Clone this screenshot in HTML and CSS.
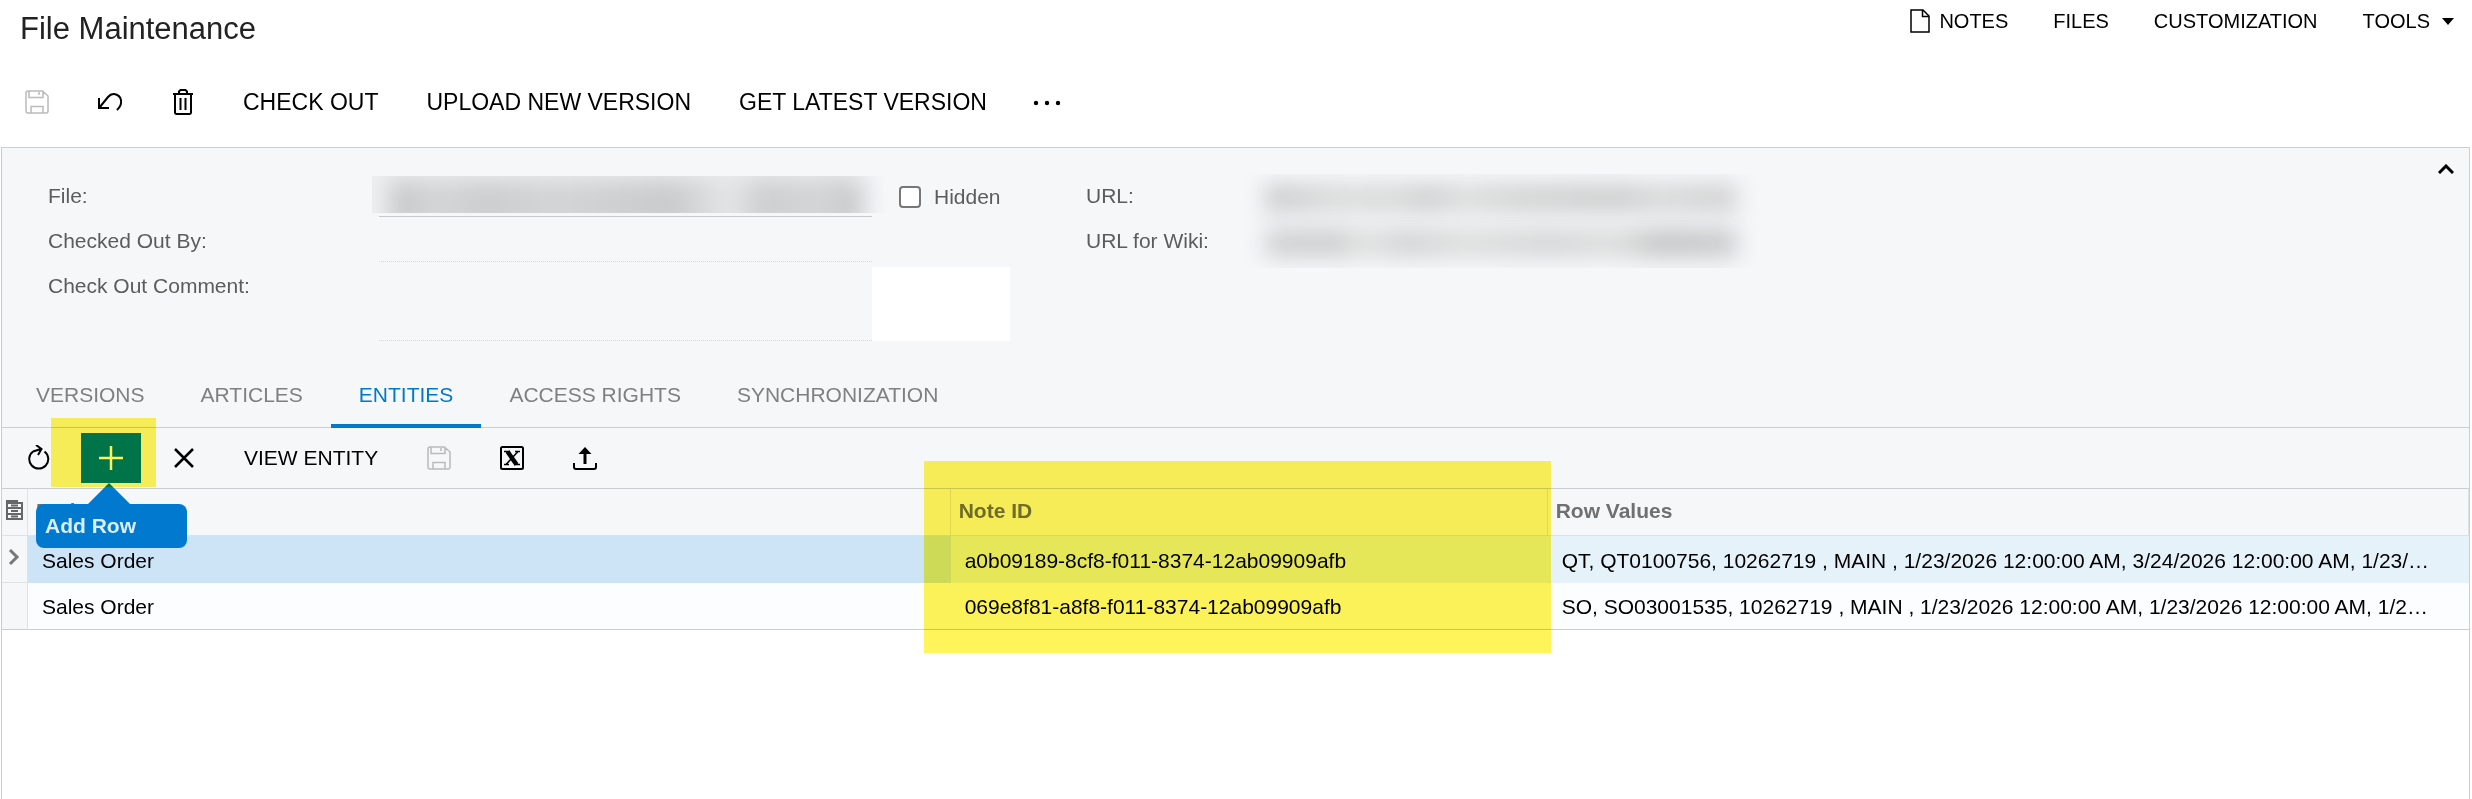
FILE: index.html
```html
<!DOCTYPE html>
<html lang="en">
<head>
    <meta charset="UTF-8">
    <meta name="viewport" content="width=device-width, initial-scale=1.0">
    <title>File Maintenance</title>
    <link rel="stylesheet" href="styles.css">
</head>
<body>
    <header class="top">
        <h1>File Maintenance</h1>
        <nav class="menu">
            <a href="#"><svg width="20" height="24" viewBox="0 0 20 24" fill="none" stroke="#000" stroke-width="1.5"><path d="M1 1h12l6 6v16H1zM12.500 1v6.500H19"/></svg>NOTES</a>
            <a href="#">FILES</a>
            <a href="#">CUSTOMIZATION</a>
            <a href="#">TOOLS<span class="caret"></span></a>
        </nav>
    </header>
    <div class="toolbar">
        <button class="icon" aria-label="Save" disabled><svg width="24" height="24" viewBox="0 0 24 24" fill="none" stroke="#bbb" stroke-width="1.5"><path d="M3 1h14.500L23 6v15a2 2 0 0 1-2 2H3a2 2 0 0 1-2-2V3a2 2 0 0 1 2-2zM4 1v6.500h14V1M6 23v-6.500h12V23M14 2v3"/></svg></button>
        <button class="icon" aria-label="Undo"><svg width="26" height="24" viewBox="0 0 26 24" fill="none" stroke="#000" stroke-width="2"><path d="M2 8v10h10M2.500 17.500L11 7C16 1 25 5 24 13c0 3-2 5-4 7"/></svg></button>
        <button class="icon" aria-label="Delete"><svg width="20" height="26" viewBox="0 0 20 26" fill="none" stroke="#000" stroke-width="2"><path d="M0 5h20M2 5v18.500a1.500 1.500 0 0 0 1.500 1.500h13a1.500 1.500 0 0 0 1.500-1.500V5M6 5V2.500L7.500 1h5L14 2.500V5M7.500 9v12M12.500 9v12"/></svg></button>
        <button class="text">CHECK OUT</button>
        <button class="text">UPLOAD NEW VERSION</button>
        <button class="text">GET LATEST VERSION</button>
        <button class="more" aria-label="More"><svg width="28" height="6" viewBox="0 0 28 6"><circle cx="3" cy="3" r="2.200"/><circle cx="14" cy="3" r="2.200"/><circle cx="25" cy="3" r="2.200"/></svg></button>
    </div>
    <main class="panel">
        <section class="form">
            <div class="fields">
                <label for="file">File:</label>
                <div class="field">
                    <input type="text" id="file" class="line">
                    <div class="mask"><i></i></div>
                </div>
                <label class="check"><input type="checkbox">Hidden</label>
                <label for="by">Checked Out By:</label>
                <input type="text" id="by" class="line dots">
                <span></span>
                <label for="comment">Check Out Comment:</label>
                <textarea id="comment" class="line dots"></textarea>
                <div class="blank"></div>
            </div>
            <dl class="links">
                <dt>URL:</dt>
                <dt>URL for Wiki:</dt>
                <dd class="smudge"><i></i><i></i></dd>
            </dl>
            <button class="fold" aria-label="Collapse"><svg width="16" height="10" viewBox="0 0 16 10" fill="none" stroke="#000" stroke-width="3"><path d="M1 9l7-7 7 7"/></svg></button>
        </section>
        <nav class="tabs">
            <a href="#">VERSIONS</a>
            <a href="#">ARTICLES</a>
            <a href="#" class="active">ENTITIES</a>
            <a href="#">ACCESS RIGHTS</a>
            <a href="#">SYNCHRONIZATION</a>
        </nav>
        <div class="gridbar">
            <button class="icon" aria-label="Refresh"><svg width="22" height="26" viewBox="0 0 22 26" fill="none" stroke="#000" stroke-width="2"><path d="M5 6.500A9.500 9.500 0 1 0 16.500 6.500M5 6.500L13 4M8 0l5.500 4L10 10"/></svg></button>
            <div class="addbox">
                <button class="add" aria-label="Add Row"><svg width="24" height="24" viewBox="0 0 24 24" stroke="#fff" stroke-width="2.500"><path d="M12 0v24M0 12h24"/></svg></button>
                <div class="tip">Add Row</div>
                <div class="mark"></div>
            </div>
            <button class="icon" aria-label="Delete Row"><svg width="20" height="20" viewBox="0 0 20 20" fill="none" stroke="#000" stroke-width="2.500"><path d="M1 1l18 18M19 1L1 19"/></svg></button>
            <button class="text">VIEW ENTITY</button>
            <button class="icon" aria-label="Save" disabled><svg width="24" height="24" viewBox="0 0 24 24" fill="none" stroke="#bbb" stroke-width="1.500"><path d="M3 1h14.500L23 6v15a2 2 0 0 1-2 2H3a2 2 0 0 1-2-2V3a2 2 0 0 1 2-2zM4 1v6.500h14V1M6 23v-6.500h12V23M14 2v3"/></svg></button>
            <button class="icon" aria-label="Export to Excel"><svg width="24" height="24" viewBox="0 0 24 24" fill="none" stroke="#000" stroke-width="2"><rect x="1" y="1" width="22" height="22" rx="1.500"/><path d="M7.500 5.500L16.500 18.500" stroke-width="4.500"/><path d="M18 5.500L6 18.500M4 5.500h6M15 5.500h5M4 18.500h5M14 18.500h6" stroke-width="1.500"/></svg></button>
            <button class="icon" aria-label="Upload"><svg width="24" height="24" viewBox="0 0 24 24" fill="none" stroke="#000" stroke-width="2"><path d="M1 17v4a2 2 0 0 0 2 2h18a2 2 0 0 0 2-2v-4"/><path d="M12 18V5" stroke-width="3"/><path d="M5.500 8L12 1l6.500 7z" fill="#000" stroke="none"/></svg></button>
        </div>
        <table class="grid">
            <colgroup><col class="c0"><col class="c1"><col class="c2"><col></colgroup>
            <thead>
                <tr>
                    <th><svg width="17" height="20" viewBox="0 0 17 20"><path d="M0 0h12v2h5v18H0z" fill="#666"/><path d="M2 4h13v3H2zM2 9h13v4H2zM2 15h13v3H2z" fill="#f5f7f9"/><path d="M5 4.500h7v2H5zM5 10h7v2H5zM5 15.500h7v2H5z" fill="#666"/></svg></th>
                    <th>Entity</th>
                    <th class="noteid">Note ID<div class="mark"></div></th>
                    <th>Row Values</th>
                </tr>
            </thead>
            <tbody>
                <tr class="selected">
                    <td><svg width="12" height="18" viewBox="0 0 12 18" fill="none" stroke="#777" stroke-width="3"><path d="M2 2l7 7-7 7"/></svg></td>
                    <td class="current">Sales Order</td>
                    <td>a0b09189-8cf8-f011-8374-12ab09909afb</td>
                    <td>QT, QT0100756, 10262719 , MAIN , 1/23/2026 12:00:00 AM, 3/24/2026 12:00:00 AM, 1/23/2026 12:00:00 AM</td>
                </tr>
                <tr>
                    <td></td>
                    <td>Sales Order</td>
                    <td>069e8f81-a8f8-f011-8374-12ab09909afb</td>
                    <td>SO, SO03001535, 10262719 , MAIN , 1/23/2026 12:00:00 AM, 1/23/2026 12:00:00 AM, 1/23/2026 12:00:00 AM</td>
                </tr>
            </tbody>
        </table>
    </main>
</body>
</html>
```
FILE: styles.css
```css
* {
    margin: 0;
    padding: 0;
    box-sizing: border-box;
}
body {
    display: flex;
    flex-direction: column;
    min-height: 100vh;
    background: #fff;
    color: #000;
    font: 21px/24px "Liberation Sans", Arial, sans-serif;
}
a {
    color: inherit;
    text-decoration: none;
}
button {
    border: 0;
    background: none;
    color: #000;
    font: inherit;
    white-space: nowrap;
}
svg {
    display: block;
}

/* title and menu */
.top {
    display: flex;
    justify-content: space-between;
    align-items: flex-start;
    height: 60px;
    padding: 0 18px 0 20px;
}
h1 {
    padding-top: 11px;
    color: #222;
    font-size: 31px;
    line-height: 36px;
    font-weight: normal;
}
.menu {
    display: flex;
    gap: 45px;
    padding-top: 9px;
    font-size: 20px;
}
.menu a {
    display: flex;
    align-items: center;
    gap: 9px;
}
.caret {
    margin-left: 3px;
    border: 6px solid transparent;
    border-top: 7px solid #000;
    border-bottom: 0;
}

.toolbar {
    display: flex;
    align-items: center;
    height: 87px;
    padding-bottom: 4px;
    font-size: 23px;
}
.icon {
    display: flex;
    align-items: center;
    justify-content: center;
    width: 73px;
    height: 50px;
}
.text {
    padding: 0 24px;
}
.more {
    padding: 2px 22px 0;
}

/* document form */
.panel {
    flex: 1;
    margin: 0 2px 0 1px;
    border: 1px solid #c9ced0;
    border-bottom: 0;
}
.form {
    position: relative;
    display: flex;
    height: 219px;
    padding: 26px 46px 0;
    background: #f5f7f9;
    color: #5c5c5c;
}
.fields {
    display: grid;
    grid-template-columns: 331px 493px 214px;
    grid-template-rows: 45px 45px 78px;
    align-items: start;
}
.fields > label {
    padding-top: 10px;
}
.field {
    position: relative;
}
.line {
    display: block;
    width: 100%;
    height: 43px;
    border: 0;
    border-bottom: 1px solid #c6cacc;
    background: none;
    font: inherit;
    resize: none;
}
.dots {
    border-bottom: 1px dotted #d5d8da;
}
textarea.line {
    height: 77px;
}
.mask {
    position: absolute;
    top: 2px;
    left: -7px;
    right: -16px;
    height: 37px;
    overflow: hidden;
    background: linear-gradient(90deg, #eeeff0, #e9ebec 90%, #f5f7f9);
}
.mask i {
    display: block;
    height: 50px;
    margin: 4px 26px 0 18px;
    background: linear-gradient(90deg, #c4c6c7, #d3d5d6 10%, #cbcdce 20%, #d2d4d5 35%, #c8cacb 60%, #e4e6e7 72%, #cbcdce 79%, #d3d5d6 90%, #c6c8c9);
    filter: blur(11px);
}
.fields > .check {
    display: flex;
    align-items: center;
    gap: 13px;
    padding: 11px 0 0 27px;
}
.check input {
    appearance: none;
    width: 22px;
    height: 22px;
    border: 2px solid #777;
    border-radius: 4px;
    background: #fff;
}
.blank {
    width: 138px;
    height: 74px;
    margin-top: 3px;
    background: #fff;
}
.links {
    position: relative;
    width: 660px;
}
.links dt {
    height: 45px;
    padding-top: 10px;
}
.smudge {
    position: absolute;
    top: 0;
    left: 155px;
    width: 520px;
    height: 94px;
    padding-top: 10px;
    overflow: hidden;
}
.smudge i {
    display: block;
    height: 28px;
    margin: 0 24px 17px;
    background: linear-gradient(90deg, #cacacb, #dadada 15%, #d9d9d9 28%, #cececf 34%, #dcdcdc 42%, #d2d2d2 55%, #cdcdce 75%, #d8d8d8 83%, #d0d0d1);
    filter: blur(11px);
}
.smudge i + i {
    background: linear-gradient(90deg, #d0d0d1, #cdcdce 15%, #e0e0e0 21%, #d2d2d3 30%, #dddddd 42%, #d5d5d6 60%, #dcdcdc 74%, #c4c4c5 84%, #cbcbcc);
}
.fold {
    position: absolute;
    top: 16px;
    right: 15px;
}

.tabs {
    display: flex;
    height: 61px;
    padding-left: 6px;
    border-bottom: 1px solid #c9ced0;
    background: #f5f7f9;
    color: #808080;
}
.tabs a {
    height: 61px;
    padding: 16px 28px 0;
}
.tabs .active {
    border-bottom: 4px solid #0079cf;
    color: #0079c8;
}

/* details grid */
.gridbar {
    display: flex;
    align-items: center;
    height: 60px;
    background: #f5f7f9;
}
.addbox {
    position: relative;
    margin: 0 6px;
}
.add {
    display: flex;
    align-items: center;
    justify-content: center;
    width: 60px;
    height: 50px;
    background: #0079cf;
}
.mark {
    position: absolute;
    top: -15px;
    left: -30px;
    right: -15px;
    height: 69px;
    background: #fff45a;
    mix-blend-mode: multiply;
    pointer-events: none;
    z-index: 2;
}
.tip {
    position: absolute;
    top: 71px;
    left: -45px;
    width: 151px;
    padding: 9px;
    border-radius: 8px;
    background: #0079cf;
    color: #d9effc;
    font-weight: bold;
    line-height: 26px;
    z-index: 1;
}
.tip::before {
    content: "";
    position: absolute;
    top: -21px;
    left: 52px;
    border: 21px solid transparent;
    border-top: 0;
    border-bottom-color: #0079cf;
}
.grid {
    width: 100%;
    table-layout: fixed;
    border-collapse: separate;
    border-spacing: 0;
}
.c0 {
    width: 26px;
}
.c1 {
    width: 37.4%;
}
.c2 {
    width: 24.2%;
}
th {
    height: 48px;
    padding: 0 8px 2px;
    border-top: 1px solid #c9ced0;
    border-right: 1px solid #dfe1e2;
    border-bottom: 1px solid #dfe1e2;
    background: #f5f7f9;
    color: #707070;
    text-align: left;
}
th:first-child {
    padding: 0 0 4px 4px;
}
td {
    height: 47px;
    padding: 2px 36px 0 14px;
    background: #fbfdff;
    overflow: hidden;
    text-overflow: ellipsis;
    white-space: nowrap;
}
td:first-child {
    padding: 0 0 4px 6px;
    border-right: 1px solid #dfe1e2;
    background: #f5f7f9;
}
tr:last-child td {
    border-bottom: 1px solid #c9ced0;
}
.selected td {
    background: #e5f2fa;
}
.selected td:first-child {
    background: #f5f7f9;
    border-bottom: 1px solid #dfe1e2;
}
.selected .current {
    background: #cce4f6;
}
.noteid {
    position: relative;
}
.noteid .mark {
    top: -28px;
    left: -27px;
    right: -4px;
    height: 192px;
}
```
